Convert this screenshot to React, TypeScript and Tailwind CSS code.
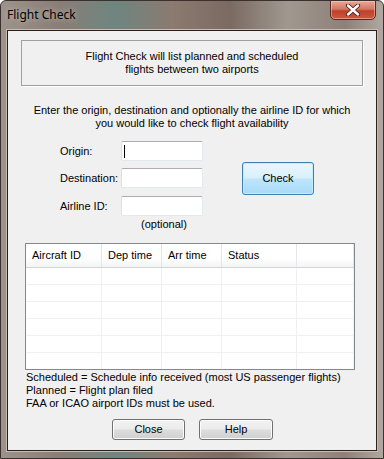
import React from "react";

const ui = { fontFamily: '"Liberation Sans", Arial, sans-serif' } as React.CSSProperties;

function TextBox({ cursor }: { cursor?: boolean }) {
  return (
    <div className="relative h-[20px] w-[82px] rounded-[2px] border border-[#abadb3] border-l-[#dbdfe6] border-r-[#e3e9ef] border-b-[#e3e9ef] bg-white">
      {cursor && <div className="absolute left-[2px] top-[3px] h-[13px] w-[1px] bg-black" />}
    </div>
  );
}

function Btn({ label, w, h }: { label: string; w: string; h: string }) {
  return (
    <div
      className={`${w} ${h} flex items-center justify-center rounded-[3px] border border-[#707070] bg-[linear-gradient(#f2f2f2_0%,#ebebeb_48%,#dddddd_52%,#cfcfcf_100%)] text-[11px] text-black shadow-[inset_0_0_0_1px_#fcfcfc]`}
    >
      {label}
    </div>
  );
}

export default function App() {
  const cols = [
    { label: "Aircraft ID", w: "w-[76px]" },
    { label: "Dep time", w: "w-[60px]" },
    { label: "Arr time", w: "w-[60px]" },
    { label: "Status", w: "w-[75px]" },
    { label: "", w: "flex-1" },
  ];
  const rows = [0, 1, 2, 3, 4, 5];
  return (
    <div
      className="flex h-[459px] w-[384px] flex-col overflow-hidden rounded-t-[6px] border border-[#3a3030] bg-[linear-gradient(90deg,#9c948c_0%,#8a7e76_15%,#6e8580_30%,#8c7a70_45%,#7a6a62_60%,#a09890_75%,#8e8078_90%,#b0a8a0_100%)]"
      style={ui}
    >
      {/* title bar */}
      <div className="flex h-[29px] shrink-0 items-start justify-between pl-[6px] pr-[7px]">
        <div
          className="pt-[5px] text-[12px] text-black"
          style={{ fontFamily: '"Noto Sans", "Open Sans", sans-serif', textShadow: "0 0 6px rgba(255,255,255,0.6)" }}
        >
          Flight Check
        </div>
        <div className="-mt-[1px] flex h-[20px] w-[46px] items-center justify-center rounded-b-[5px] border border-[#5a2a22] bg-[linear-gradient(#e9a898_0%,#d27862_45%,#c0402a_55%,#c85a40_100%)] shadow-[inset_0_0_0_1px_rgba(255,210,200,0.5)]">
          <svg width="16" height="12" viewBox="0 0 16 12">
            <path d="M3 1.5 L13 10.5 M13 1.5 L3 10.5" stroke="#4a2018" strokeWidth="4.2" strokeLinecap="round" />
            <path d="M3 1.5 L13 10.5 M13 1.5 L3 10.5" stroke="#ffffff" strokeWidth="2.4" strokeLinecap="round" />
          </svg>
        </div>
      </div>

      {/* client area with frame */}
      <div className="mx-[6px] flex flex-1 flex-col">
        <div className="flex h-[421px] flex-col border border-[#2b1e18] bg-[#f0f0f0] shadow-[0_0_0_1px_#c8bcb4]">
          {/* info box */}
          <div className="mx-[13px] mt-[9px] flex h-[46px] flex-col items-center justify-center border border-[#a0a0a0] text-[11px] leading-[13px] text-black shadow-[1px_1px_0_#ffffff]">
            <div>Flight Check will list planned and scheduled</div>
            <div>flights between two airports</div>
          </div>

          {/* instructions */}
          <div className="mt-[18px] flex flex-col items-center text-[11px] leading-[13px] text-black">
            <div>Enter the origin, destination and optionally the airline ID for which</div>
            <div>you would like to check flight availability</div>
          </div>

          {/* form */}
          <div className="mt-[11px] flex">
            <div className="ml-[52px] flex flex-col gap-[7px]">
              <div className="flex h-[20px] items-center">
                <div className="w-[61px] text-[11px] text-black">Origin:</div>
                <TextBox cursor />
              </div>
              <div className="flex h-[20px] items-center">
                <div className="w-[61px] text-[11px] text-black">Destination:</div>
                <TextBox />
              </div>
              <div className="mt-[1px] flex h-[20px] items-center">
                <div className="w-[61px] text-[11px] text-black">Airline ID:</div>
                <TextBox />
              </div>
              <div className="-mt-[5px] pl-[81px] text-[11px] leading-[13px] text-black">(optional)</div>
            </div>
            <div className="ml-[39px] mt-[21px]">
              <div className="flex h-[33px] w-[72px] items-center justify-center rounded-[3px] border border-[#3c7fb1] bg-[linear-gradient(#eaf6fd_0%,#d9f0fc_48%,#bee6fd_52%,#a7d9f5_100%)] text-[11px] text-black shadow-[inset_0_0_0_1px_#bff0ff]">
                Check
              </div>
            </div>
          </div>

          {/* table */}
          <div className="ml-[17px] mt-[12px] flex h-[127px] w-[330px] flex-col overflow-hidden border border-[#828790] bg-white">
            <div className="flex h-[24px] shrink-0 border-b border-[#d5d5d5] bg-[linear-gradient(#ffffff_0%,#ffffff_60%,#f3f4f5_100%)]">
              {cols.map((c, i) => (
                <div
                  key={i}
                  className={`${c.w} flex items-center border-r border-[#e3e5e8] pl-[6px] text-[11px] text-black`}
                >
                  {c.label}
                </div>
              ))}
            </div>
            {rows.map((r) => (
              <div key={r} className="flex h-[17px] shrink-0 border-b border-[#f0f0f0]">
                {cols.map((c, i) => (
                  <div key={i} className={`${c.w} border-r border-[#f0f0f0]`} />
                ))}
              </div>
            ))}
          </div>

          {/* notes */}
          <div className="ml-[18px] mt-[1px] flex flex-col text-[11px] leading-[13px] text-black">
            <div>Scheduled = Schedule info received (most US passenger flights)</div>
            <div>Planned = Flight plan filed</div>
            <div>FAA or ICAO airport IDs must be used.</div>
          </div>

          {/* buttons */}
          <div className="ml-[104px] mt-[9px] flex gap-[14px]">
            <Btn label="Close" w="w-[73px]" h="h-[21px]" />
            <Btn label="Help" w="w-[74px]" h="h-[21px]" />
          </div>
        </div>
      </div>
    </div>
  );
}
